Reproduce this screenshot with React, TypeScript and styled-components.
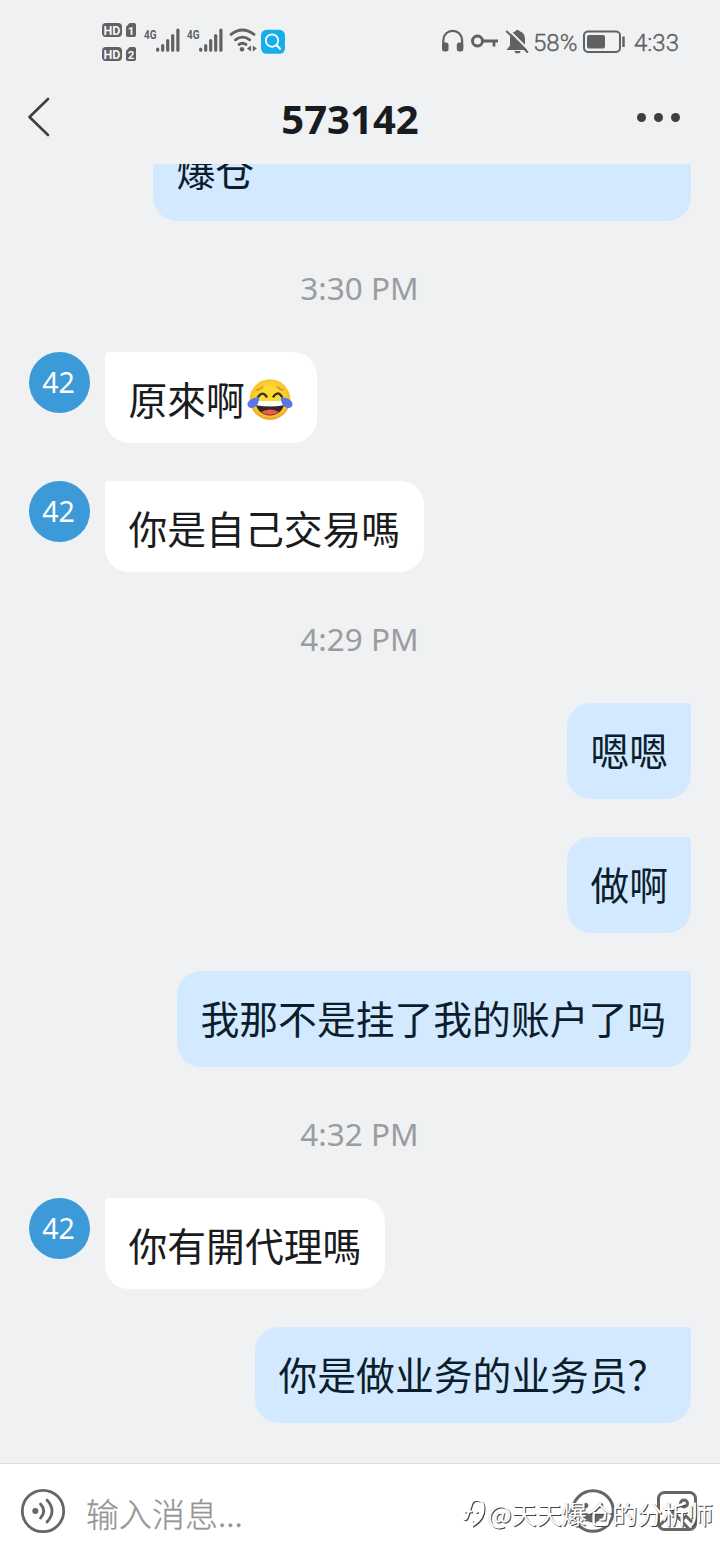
import React from "react";
import styled, { createGlobalStyle } from "styled-components";

const Global = createGlobalStyle`
  * { box-sizing: border-box; }
  body { margin: 0; background: #eff1f3; font-family: "Noto Sans", "Noto Sans CJK SC", sans-serif; }
`;

const Screen = styled.div`
  width: 720px;
  height: 1560px;
  display: flex;
  flex-direction: column;
  background: #eff1f3;
  overflow: hidden;
`;

const StatusBar = styled.div`
  height: 72px;
  flex: none;
  display: flex;
  justify-content: space-between;
  padding: 0 39px 0 100px;
  color: #5f6061;
`;

const StatusGroup = styled.div`
  display: flex;
  align-items: center;
  padding-top: 12px;
  height: 72px;
`;

const StatusText = styled.span<{ $width: number; $gap?: number }>`
  font-family: Roboto, sans-serif;
  font-weight: 300;
  -webkit-text-stroke: 0.4px #5f6061;
  font-size: 24px;
  line-height: 28px;
  width: ${(p) => p.$width}px;
  margin-left: ${(p) => p.$gap ?? 0}px;
  white-space: nowrap;
  padding-top: 2px;
`;

const Header = styled.div`
  height: 92px;
  flex: none;
  display: grid;
  grid-template-columns: 100px 1fr 120px;
  align-items: center;
`;

const BackIcon = styled.svg`
  margin: 0 0 2px 26px;
`;

const Title = styled.h1`
  margin: 0;
  text-align: center;
  font-size: 40px;
  line-height: 56px;
  font-weight: 700;
  color: #191c1f;
  padding-top: 2px;
`;

const Dots = styled.div`
  display: flex;
  gap: 8px;
  padding: 0 0 2px 37px;
`;

const Dot = styled.i`
  width: 9px;
  height: 9px;
  border-radius: 50%;
  background: #3d3f41;
`;

const Chat = styled.main`
  height: 1299px;
  flex: none;
  overflow: hidden;
  display: flex;
  flex-direction: column;
  justify-content: flex-end;
  gap: 38px;
  padding: 0 29px 40px;
`;

const Time = styled.div`
  height: 55px;
  flex: none;
  text-align: center;
  font-size: 31.5px;
  line-height: 57px;
  color: #9b9c9d;
  padding-right: 1px;
`;

const Row = styled.div<{ $mine?: boolean }>`
  display: flex;
  flex: none;
  align-items: flex-start;
  justify-content: ${(p) => (p.$mine ? "flex-end" : "flex-start")};
  gap: 15px;
`;

const Avatar = styled.div`
  width: 61px;
  height: 61px;
  border-radius: 50%;
  background: #3d9ad9;
  color: #fff;
  text-align: center;
  font-size: 28.5px;
  line-height: 60px;
  padding-right: 2px;
`;

const Bubble = styled.div<{ $mine?: boolean; $width: number; $tall?: boolean }>`
  width: ${(p) => p.$width}px;
  height: ${(p) => (p.$tall ? 144 : p.$mine ? 96 : 91)}px;
  padding: 0 24px 0 23.5px;
  display: flex;
  align-items: ${(p) => (p.$tall ? "flex-end" : "center")};
  padding-bottom: ${(p) => (p.$tall ? 24 : p.$mine ? 4 : 0)}px;
  background: ${(p) => (p.$mine ? "#d2e9ff" : "#fff")};
  color: ${(p) => (p.$mine ? "#0c1d2b" : "#191b1d")};
  border-radius: ${(p) => (p.$mine ? "24px 4px 24px 24px" : "4px 24px 24px 24px")};
  font-family: "Noto Sans CJK SC", sans-serif;
  font-size: 38.8px;
  line-height: 56px;
  white-space: nowrap;
`;

const Composer = styled.footer`
  height: 97px;
  flex: none;
  border-top: 1px solid #dcdfe1;
  background: #fff;
  display: flex;
  align-items: flex-start;
  padding: 24px 21px 0 20px;
  position: relative;
`;

const Placeholder = styled.div`
  flex: 1;
  padding-left: 20px;
  font-family: "Noto Sans CJK SC", sans-serif;
  font-weight: 300;
  -webkit-text-stroke: 0.3px #959595;
  font-size: 33px;
  line-height: 50px;
  color: #959595;
`;

const Actions = styled.div`
  display: flex;
  gap: 39px;
`;

const Watermark = styled.div`
  position: absolute;
  right: 7px;
  top: 30px;
  display: flex;
  align-items: center;
  font-family: "Noto Sans CJK SC", sans-serif;
  font-weight: 400;
  font-size: 25.2px;
  line-height: 38px;
  color: #fff;
  text-shadow: 1px 1px 0 #444, -0.5px -0.5px 0.5px #ccc;
`;

const Hd = ({ n }: { n: string }) => (
  <g>
    <rect x="2" y="0.5" width="20" height="14" rx="4" fill="#606162" />
    <text x="12" y="12" textAnchor="middle" fontFamily="Roboto" fontWeight="700" fontSize="12.5" fill="#f4f5f6">HD</text>
    <path d="M29.5 0.500h4.700a1.800 1.800 0 0 1 1.800 1.800v10.400a1.800 1.800 0 0 1-1.800 1.800h-6.400a1.800 1.800 0 0 1-1.800-1.800V4.600z" fill="#606162" />
    <text x="31" y="12" textAnchor="middle" fontFamily="Roboto" fontWeight="700" fontSize="11.5" fill="#f4f5f6">{n}</text>
  </g>
);

const Signal = () => (
  <g>
    <text x="0" y="13" fontFamily="Roboto" fontWeight="700" fontSize="13.500" textLength="12.500" lengthAdjust="spacingAndGlyphs" fill="#606162">4G</text>
    <path d="M13.700 23v1.200M18.700 19.500v4.700M23.700 14.500v9.700M28.700 9.500v14.700M33.900 4v20.200" stroke="#606162" strokeWidth="3.200" strokeLinecap="round" />
  </g>
);

const StatusLeft = () => (
  <svg width="190" height="44" viewBox="0 0 190 44" fill="none">
    <g transform="translate(0 2.500)"><Hd n="1" /></g>
    <g transform="translate(0 26.500)"><Hd n="2" /></g>
    <g transform="translate(44 6)"><Signal /></g>
    <g transform="translate(87 6)"><Signal /></g>
    <g stroke="#606162" strokeWidth="2.800" strokeLinecap="round">
      <path d="M131 14.400Q142.500 5.500 154 14.400" />
      <path d="M135.400 19.800Q142.500 14.500 149.700 19.800" />
      <path d="M139 24.500Q142.500 22 146 24.500" />
    </g>
    <circle cx="142" cy="29.200" r="2.300" fill="#606162" />
    <path d="M151 25.500v6l-4-3zM152.800 25.500v6l4-3z" fill="#606162" />
    <rect x="161" y="9.800" width="24" height="24" rx="5.500" fill="#16aeea" />
    <circle cx="172" cy="20.600" r="6.200" stroke="#fff" strokeWidth="1.800" />
    <path d="M176.700 25.300l3.300 3.500" stroke="#fff" strokeWidth="2.200" strokeLinecap="round" />
  </svg>
);

const StatusRight = () => (
  <svg width="90" height="30" viewBox="0 0 90 30" fill="none">
    <path d="M3.300 20v-6.800a9.400 9.400 0 0 1 18.800 0V20" stroke="#606162" strokeWidth="2.200" />
    <rect x="2" y="15.500" width="6.500" height="9" rx="2.500" fill="#606162" />
    <rect x="16.800" y="15.500" width="6.500" height="9" rx="2.500" fill="#606162" />
    <circle cx="37.500" cy="14" r="5" stroke="#606162" strokeWidth="3" />
    <path d="M43 14h15M54 14v5.500" stroke="#606162" strokeWidth="2.800" />
    <path d="M66.500 23l3.500-4.500V12c0-4.200 2.500-6.800 5.200-7.400.5-2 4.100-2 4.600 0 3 .6 5.200 3.300 5.200 7.400v6.500l3 4.500z" fill="#606162" />
    <path d="M74.500 24h6a3 2.300 0 0 1-6 0z" fill="#606162" />
    <path d="M68.500 2.700l20 20" stroke="#eff1f3" strokeWidth="2" />
    <path d="M66.800 4.500l20.500 20.500" stroke="#606162" strokeWidth="2" strokeLinecap="round" />
  </svg>
);

const Battery = styled.svg`
  margin-left: 5px;
`;

const Joy = () => (
  <svg width="48" height="46" viewBox="0 0 47 46">
    <defs>
      <radialGradient id="face" cx="50%" cy="45%" r="55%">
        <stop offset="0.45" stopColor="#fbdb2f" />
        <stop offset="0.85" stopColor="#f8c22b" />
        <stop offset="1" stopColor="#e59622" />
      </radialGradient>
    </defs>
    <g transform="translate(1 2.500)">
      <circle cx="23.500" cy="22" r="20.300" fill="url(#face)" />
      <path d="M9.500 23.500h28c1 8-5.500 14.500-14 14.500s-15-6.500-14-14.500z" fill="#332724" />
      <path d="M9.500 23.500h28l-1.300 4.500q-12.700 2-25.400 0z" fill="#fff" />
      <path d="M14.500 34.500q9-5 18 0-4 3-9 3t-9-3z" fill="#ee5948" />
      <path d="M11.500 19.500q4.500-6.500 8.500-.5M27 19q4.500-6.500 8.500.5" fill="none" stroke="#3e2d20" strokeWidth="2.400" strokeLinecap="round" />
      <path d="M10.500 12.500q3-.5 5.500-3.200M36.500 12.500q-3-.5-5.500-3.200" fill="none" stroke="#df9727" strokeWidth="1.800" strokeLinecap="round" />
      <path d="M12.500 19.500c.5 5.500-2.500 10.500-7 11-3.500.3-5.500-2.800-4-5.800C3.300 21 8 20.500 12.500 19.500z" fill="#5875ed" />
      <path d="M34.500 19.500c-.5 5.500 2.500 10.500 7 11 3.500.3 5.500-2.800 4-5.800-1.800-3.700-6.500-4.200-11-5.200z" fill="#5875ed" />
    </g>
  </svg>
);

const Incoming = ({ width, children }: { width: number; children: React.ReactNode }) => (
  <Row>
    <Avatar>42</Avatar>
    <Bubble $width={width}>{children}</Bubble>
  </Row>
);

const Outgoing = ({ width, tall, children }: { width: number; tall?: boolean; children: React.ReactNode }) => (
  <Row $mine>
    <Bubble $mine $width={width} $tall={tall}>{children}</Bubble>
  </Row>
);

const markPath = "M2.500 22.500q2.500 2 4-3l3.500-11q1.500-4.500 5-4.500M4 15.500h6M16 4q6.500 0 6.500 8 0 11-10.500 17l-1-4M15.500 16h.5";

export default function App() {
  return (
    <Screen>
      <Global />
      <StatusBar>
        <StatusGroup><StatusLeft /></StatusGroup>
        <StatusGroup>
          <StatusRight />
          <StatusText $width={45} $gap={3}>58%</StatusText>
          <Battery width="43" height="24" viewBox="0 0 43 24" fill="none">
            <rect x="1" y="1.500" width="36" height="20.500" rx="4" stroke="#606162" strokeWidth="2" />
            <rect x="4" y="5" width="18" height="13.500" rx="2" fill="#606162" />
            <path d="M40.500 6.500v10.500" stroke="#606162" strokeWidth="2.500" />
          </Battery>
          <StatusText $width={47} $gap={8}>4:33</StatusText>
        </StatusGroup>
      </StatusBar>
      <Header>
        <BackIcon width="26" height="42" viewBox="0 0 26 42" fill="none">
          <path d="M22 3L3.500 21 22 39" stroke="#3d3f41" strokeWidth="2.600" strokeLinecap="round" strokeLinejoin="round" />
        </BackIcon>
        <Title>573142</Title>
        <Dots><Dot /><Dot /><Dot /></Dots>
      </Header>
      <Chat>
        <Outgoing width={538} tall>爆仓</Outgoing>
        <Time>3:30 PM</Time>
        <Incoming width={212}>原來啊<Joy /></Incoming>
        <Incoming width={319}>你是自己交易嗎</Incoming>
        <Time>4:29 PM</Time>
        <Outgoing width={124}>嗯嗯</Outgoing>
        <Outgoing width={124}>做啊</Outgoing>
        <Outgoing width={514}>我那不是挂了我的账户了吗</Outgoing>
        <Time>4:32 PM</Time>
        <Incoming width={280}>你有開代理嗎</Incoming>
        <Outgoing width={436}>你是做业务的业务员？</Outgoing>
      </Chat>
      <Composer>
        <svg width="46" height="46" viewBox="0 0 46 46" fill="none" stroke="#666" strokeWidth="2.800" strokeLinecap="round">
          <circle cx="23" cy="23" r="20.700" />
          <circle cx="15.300" cy="23" r="3" fill="#666" stroke="none" />
          <path d="M20.500 16q6.500 7 0 14M27 12q10 11 0 22" />
        </svg>
        <Placeholder>输入消息...</Placeholder>
        <Actions>
          <svg width="46" height="46" viewBox="0 0 46 46" fill="none" stroke="#666" strokeWidth="3">
            <circle cx="23" cy="23" r="20.300" />
            <circle cx="15.500" cy="17.500" r="2.800" fill="#666" stroke="none" />
            <circle cx="30.500" cy="17.500" r="2.800" fill="#666" stroke="none" />
            <path d="M13 27q10 12 20 0z" fill="#666" />
          </svg>
          <svg width="44" height="46" viewBox="0 0 44 46" fill="none" stroke="#666" strokeWidth="3">
            <rect x="3.500" y="4.500" width="37" height="37" rx="6" />
            <circle cx="29" cy="15.500" r="3.500" />
            <path d="M4 38l14-14 16 17M26 33l5-5 9 9" />
          </svg>
        </Actions>
        <Watermark>
          <svg width="28" height="34" viewBox="-1 0 28 34" fill="none" strokeLinecap="round">
            <path transform="translate(1 1)" d={markPath} stroke="#444" strokeWidth="2.200" />
            <path d={markPath} stroke="#fff" strokeWidth="2.200" />
          </svg>
          @天天爆仓的分析师
        </Watermark>
      </Composer>
    </Screen>
  );
}
